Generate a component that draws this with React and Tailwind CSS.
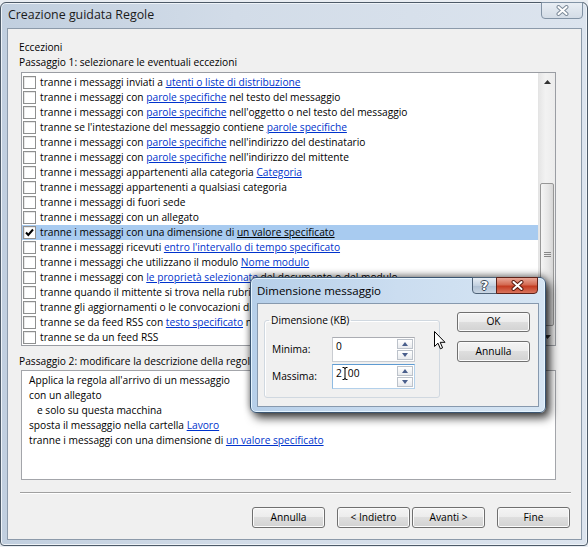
import React from "react";

const rules = [
  ["tranne i messaggi inviati a ", { link: "utenti o liste di distribuzione" }],
  ["tranne i messaggi con ", { link: "parole specifiche" }, " nel testo del messaggio"],
  ["tranne i messaggi con ", { link: "parole specifiche" }, " nell'oggetto o nel testo del messaggio"],
  ["tranne se l'intestazione del messaggio contiene ", { link: "parole specifiche" }],
  ["tranne i messaggi con ", { link: "parole specifiche" }, " nell'indirizzo del destinatario"],
  ["tranne i messaggi con ", { link: "parole specifiche" }, " nell'indirizzo del mittente"],
  ["tranne i messaggi appartenenti alla categoria ", { link: "Categoria" }],
  ["tranne i messaggi appartenenti a qualsiasi categoria"],
  ["tranne i messaggi di fuori sede"],
  ["tranne i messaggi con un allegato"],
  ["tranne i messaggi con una dimensione di ", { link: "un valore specificato" }],
  ["tranne i messaggi ricevuti ", { link: "entro l'intervallo di tempo specificato" }],
  ["tranne i messaggi che utilizzano il modulo ", { link: "Nome modulo" }],
  ["tranne i messaggi con ", { link: "le proprietà selezionate" }, " del documento o del modulo"],
  ["tranne quando il mittente si trova nella rubrica ", { link: "specificata" }],
  ["tranne gli aggiornamenti o le convocazioni di riunione"],
  ["tranne se da feed RSS con ", { link: "testo specificato" }, " nel titolo"],
  ["tranne se da un feed RSS"],
];

const SELECTED = 10;

function Parts({ parts, plainLinks }) {
  return parts.map((p, i) =>
    typeof p === "string" ? (
      <span key={i}>{p}</span>
    ) : (
      <span key={i} className={plainLinks ? "underline" : "text-[#0033cc] underline"}>
        {p.link}
      </span>
    )
  );
}

function Checkbox({ checked }) {
  return (
    <span className="flex h-[13px] w-[13px] shrink-0 items-center justify-center border border-[#8e8f8f] bg-white shadow-[inset_1px_1px_0_#e6e6e6]">
      {checked && (
        <svg width="11" height="11" viewBox="0 0 11 11">
          <path d="M2 5.5 L4.3 8 L9 2.5" fill="none" stroke="#000" strokeWidth="2" />
        </svg>
      )}
    </span>
  );
}

function WinButton({ children, className = "" }) {
  return (
    <div
      className={`flex w-[73px] items-center justify-center rounded-[3px] border border-[#707070] bg-[linear-gradient(#f4f4f4_0%,#ececec_49%,#dedede_50%,#d2d2d2_100%)] text-[10.2px] text-black shadow-[inset_0_0_0_1px_#fbfbfb] ${className}`}
    >
      {children}
    </div>
  );
}

function SpinBox() {
  return (
    <div className="flex w-[17px] flex-col gap-[1px] py-[1px] pr-[1px]">
      {["M0 4 L3 0 L6 4Z", "M0 0 L3 4 L6 0Z"].map((d) => (
        <div
          key={d}
          className="flex flex-1 items-center justify-center border border-[#bcc2ca] bg-[linear-gradient(#ffffff,#e9ebee)]"
        >
          <svg width="6" height="4" viewBox="0 0 6 4">
            <path d={d} fill="#4a5f8c" />
          </svg>
        </div>
      ))}
    </div>
  );
}

function CloseGlyph({ outline }) {
  return (
    <svg width="13" height="11" viewBox="0 0 13 11">
      <path d="M2.5 2 L10.5 9 M10.5 2 L2.5 9" stroke={outline} strokeWidth="4" strokeLinecap="round" />
      <path d="M2.5 2 L10.5 9 M10.5 2 L2.5 9" stroke="#fff" strokeWidth="2" strokeLinecap="round" />
    </svg>
  );
}

function SizeDialog() {
  return (
    <div className="absolute left-[250px] top-[277px] flex h-[136px] w-[296px] flex-col rounded-[6px] border border-[#3b5571] bg-[linear-gradient(90deg,#b6cfe9_0%,#cbddf0_50%,#d6e5f3_100%)] shadow-[4px_5px_10px_rgba(0,0,0,0.75),0_-2px_7px_rgba(0,0,0,0.45),inset_0_0_0_1px_#e4f4ff]">
      {/* title bar */}
      <div className="flex h-[25px] items-start">
        <span className="mt-[4px] pl-[6px] text-[11.5px] text-black">Dimensione messaggio</span>
        <div className="-mt-[1px] ml-auto mr-[7px] flex h-[17px]">
          <div className="flex w-[25px] items-center justify-center rounded-bl-[4px] border border-[#4f6378] bg-[linear-gradient(#e8eef5,#c3d1e0_50%,#aebfd2_51%,#c9d6e4)] font-['DejaVu_Sans',sans-serif] text-[13px] font-bold leading-none text-white [text-shadow:1px_0_0_#3a4654,-1px_0_0_#3a4654,0_1px_0_#3a4654,0_-1px_0_#3a4654]">
            ?
          </div>
          <div className="-ml-[1px] flex w-[42px] items-center justify-center rounded-br-[4px] border border-[#5e2219] bg-[linear-gradient(#e9a797,#d46a52_45%,#c43c22_55%,#d9755d)]">
            <CloseGlyph outline="#5b1a10" />
          </div>
        </div>
      </div>

      {/* client area */}
      <div className="relative mx-[6px] flex h-[104px] border border-[#8799ae] bg-[#f0f0f0]">
        <fieldset className="ml-[6px] mt-[9px] h-[85px] w-[176px] rounded-[3px] border border-[#d0d8e0] shadow-[inset_1px_1px_0_#fff]">
          <legend className="ml-[4px] px-[2px] text-[10.2px] leading-[15px]">Dimensione (KB)</legend>
          <div className="mt-[9px] flex flex-col gap-[2px] pl-[7px] text-[10.2px]">
            <div className="flex items-center">
              <span className="w-[60px]">Minima:</span>
              <div className="flex h-[25px] w-[83px] border border-[#c9ccd1] border-t-[#abadb3] bg-white">
                <span className="flex-1 pl-[3px] pt-[1px] leading-[15px]">0</span>
                <SpinBox />
              </div>
            </div>
            <div className="flex items-center">
              <span className="w-[60px]">Massima:</span>
              <div className="flex h-[25px] w-[83px] border border-[#b3d0ea] border-t-[#5e9bd2] border-l-[#8fbbe2] bg-white">
                <span className="flex flex-1 items-start pl-[3px] pt-[1px] leading-[15px]">
                  2
                  <svg className="mt-[1px]" width="6" height="13" viewBox="0 0 6 13">
                    <path d="M0.5 0.5 H2 Q3 0.5 3 2 V11 Q3 12.5 2 12.5 H0.5 M5.5 0.5 H4 Q3 0.5 3 2 M3 11 Q3 12.5 4 12.5 H5.5" fill="none" stroke="#000" strokeWidth="1" />
                  </svg>
                  00
                </span>
                <SpinBox />
              </div>
            </div>
          </div>
        </fieldset>

        <div className="ml-auto mr-[8px] mt-[8px] flex flex-col gap-[9px]">
          <WinButton className="h-[20px] border-[#2f8fd0] bg-[linear-gradient(#e8f2fa_0%,#dbe9f5_49%,#c9dcec_50%,#bcd3e7_100%)] shadow-[inset_0_0_0_1px_#7fdcff]">
            OK
          </WinButton>
          <WinButton className="h-[21px]">Annulla</WinButton>
        </div>

        {/* mouse pointer */}
        <svg className="absolute left-[176px] top-[27px]" width="12" height="19" viewBox="0 0 12 19">
          <path d="M0.5 0.5 V15.5 L4 12.2 L6.4 17.8 L8.6 16.8 L6.2 11.3 H11 Z" fill="#fff" stroke="#000" strokeWidth="1" strokeLinejoin="round" />
        </svg>
      </div>
    </div>
  );
}

export default function App() {
  return (
    <div className="relative h-[547px] w-[588px] overflow-hidden bg-[#e9edf2] font-['Open_Sans',sans-serif] text-black">
      {/* main wizard window */}
      <div className="mt-[2px] flex h-[544px] w-[588px] flex-col rounded-t-[6px] rounded-b-[4px] border border-[#4d5a68] bg-[linear-gradient(90deg,#c1cfdf_0%,#d2dce8_40%,#dce4ee_100%)] shadow-[inset_0_0_0_1px_#eef3f8]">
        <div className="flex h-[25px] items-start">
          <span className="mt-[3px] pl-[7px] text-[12.4px] text-[#1b1b1b]">Creazione guidata Regole</span>
          <div className="-mt-[1px] ml-auto mr-[4px] flex h-[17px] w-[42px] items-center justify-center rounded-b-[4px] border border-[#8293a5] bg-[linear-gradient(#e9eef4,#d3dce6)]">
            <CloseGlyph outline="#7d8b9a" />
          </div>
        </div>

        <div className="ml-[6px] flex h-[512px] w-[575px] flex-col border border-[#8c9aaa] bg-[#f0f0f0] text-[10.2px] leading-[15px]">
          <div className="mt-[11px] pl-[11px]">Eccezioni</div>
          <div className="pl-[11px]">Passaggio 1: selezionare le eventuali eccezioni</div>

          {/* conditions list */}
          <div className="ml-[13px] mt-[2px] flex h-[274px] w-[535px] border border-[#9a9da3] bg-white">
            <div className="flex-1 overflow-hidden pt-[2px]">
              {rules.map((parts, i) => (
                <div
                  key={i}
                  className={`flex h-[15px] items-center gap-[4px] pl-[1px] ${i === SELECTED ? "bg-[#a8cbf0]" : ""}`}
                >
                  <Checkbox checked={i === SELECTED} />
                  <span className="whitespace-nowrap">
                    <Parts parts={parts} plainLinks={i === SELECTED} />
                  </span>
                </div>
              ))}
            </div>
            <div className="flex w-[17px] flex-col border-l border-[#e4e4e4] bg-[linear-gradient(90deg,#e6e6e6,#f2f2f2_40%,#ececec)]">
              <div className="flex h-[17px] items-center justify-center">
                <svg width="7" height="4" viewBox="0 0 7 4">
                  <path d="M0 4 L3.5 0 L7 4Z" fill="#333" />
                </svg>
              </div>
              <div className="flex-1 px-[1px]">
                <div className="mt-[93px] flex h-[143px] items-center justify-center rounded-[2px] border border-[#979797] bg-[linear-gradient(90deg,#f5f5f5,#e6e6e6_60%,#d6d6d6)]">
                  <svg width="7" height="6" viewBox="0 0 7 6">
                    <path d="M0 0.5 H7 M0 2.5 H7 M0 4.5 H7" stroke="#888" strokeWidth="1" />
                  </svg>
                </div>
              </div>
              <div className="flex h-[17px] items-center justify-center">
                <svg width="7" height="4" viewBox="0 0 7 4">
                  <path d="M0 0 L3.5 4 L7 0Z" fill="#333" />
                </svg>
              </div>
            </div>
          </div>

          <div className="mt-[8px] pl-[11px]">
            Passaggio 2: modificare la descrizione della regola (fare clic su un valore sottolineato)
          </div>

          {/* rule description */}
          <div className="ml-[13px] mt-[1px] h-[110px] w-[535px] border border-[#a3a5aa] bg-white pl-[7px] pt-[2px]">
            <div>Applica la regola all'arrivo di un messaggio</div>
            <div>con un allegato</div>
            <div className="pl-[8px]">e solo su questa macchina</div>
            <div>
              sposta il messaggio nella cartella <span className="text-[#0033cc] underline">Lavoro</span>
            </div>
            <div>
              tranne i messaggi con una dimensione di{" "}
              <span className="text-[#0033cc] underline">un valore specificato</span>
            </div>
          </div>

          <div className="ml-[12px] mt-[12px] h-[2px] w-[551px] border-t border-b border-t-[#a0a0a0] border-b-white" />

          <div className="mt-[13px] flex pr-[11px]">
            <div className="ml-auto flex">
              <WinButton className="h-[21px]">Annulla</WinButton>
              <WinButton className="ml-[12px] h-[21px]">&lt; Indietro</WinButton>
              <WinButton className="ml-[2px] h-[21px]">Avanti &gt;</WinButton>
              <WinButton className="ml-[12px] h-[21px]">Fine</WinButton>
            </div>
          </div>
        </div>
      </div>

      <SizeDialog />
    </div>
  );
}
